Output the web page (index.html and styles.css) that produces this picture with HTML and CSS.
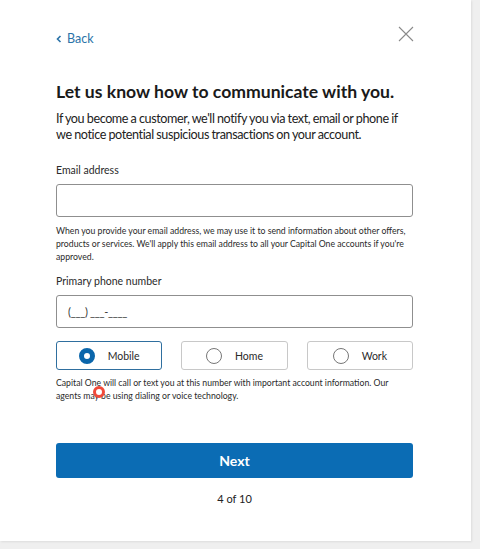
FILE: index.html
```html
<!DOCTYPE html>
<html lang="en">
<head>
<meta charset="utf-8">
<link rel="stylesheet" href="styles.css">
</head>
<body>
<div class="card">
  <div class="topbar">
    <a class="back" href="#"><svg width="6" height="8" viewBox="0 0 6 8"><path d="M4.5 1 L1.5 4 L4.5 7" fill="none" stroke="#2b73a8" stroke-width="1.6"/></svg><span>Back</span></a>
    <svg class="close" width="16" height="16" viewBox="0 0 16 16"><path d="M1 1 L15 15 M15 1 L1 15" stroke="#8a8a8a" stroke-width="1.1"/></svg>
  </div>
  <h1 class="title">Let us know how to communicate with you.</h1>
  <p class="intro">If you become a customer, we'll notify you via text, email or phone if we notice potential suspicious transactions on your account.</p>

  <label class="label">Email address</label>
  <div class="input"></div>
  <p class="help">When you provide your email address, we may use it to send information about other offers, products or services. We'll apply this email address to all your Capital One accounts if you're approved.</p>

  <label class="label label-phone">Primary phone number</label>
  <div class="input"><span class="placeholder">(___) ___-____</span></div>

  <div class="options">
    <div class="option selected"><span class="radio on"></span><span>Mobile</span></div>
    <div class="option"><span class="radio"></span><span>Home</span></div>
    <div class="option"><span class="radio"></span><span>Work</span></div>
  </div>
  <p class="help help-phone">Capital One will call or text you at this number with important account information. Our agents may be using dialing or voice technology.</p>

  <button class="next">Next</button>
  <p class="step">4 of 10</p>
  <span class="cursor"></span>
</div>
</body>
</html>
```
FILE: styles.css
```css
html, body {
  margin: 0;
  padding: 0;
}
body {
  background: #efefef;
  width: 480px;
  height: 549px;
  overflow: hidden;
  font-family: Lato, "Open Sans", sans-serif;
  color: #1f1f1f;
}
.card {
  position: relative;
  box-sizing: border-box;
  width: 471px;
  height: 541px;
  background: #fff;
  box-shadow: 1px 1px 2px rgba(0,0,0,0.08);
  padding: 0 58px 0 56px;
  display: flex;
  flex-direction: column;
}
.topbar {
  display: flex;
  justify-content: space-between;
  align-items: flex-start;
  height: 60px;
}
.back {
  margin-top: 31px;
  display: flex;
  align-items: center;
  gap: 5px;
  color: #2b73a8;
  text-decoration: none;
  font-size: 12.5px;
}
.close {
  margin-top: 26px;
  margin-right: -1px;
}
.title {
  margin: 21px 0 0;
  font-size: 17.6px;
  font-weight: 700;
  line-height: 22px;
  color: #1a1a1a;
}
.intro {
  margin: 8px 0 0;
  font-size: 12.6px;
  letter-spacing: -0.4px;
  word-spacing: -0.3px;
  line-height: 16px;
  color: #222;
}
.label {
  display: block;
  margin-top: 20px;
  font-size: 10.5px;
  line-height: 14px;
  color: #2a2a2a;
}
.label-phone {
  margin-top: 11px;
}
.input {
  margin-top: 7px;
  height: 33px;
  box-sizing: border-box;
  border: 1px solid #8f8f8f;
  border-radius: 3px;
  display: flex;
  align-items: center;
  padding-left: 11px;
}
.placeholder {
  font-size: 11px;
  letter-spacing: -0.3px;
  color: #333;
}
.help {
  margin: 7px 0 0;
  font-size: 8.7px;
  line-height: 13px;
  color: #2a2a2a;
}
.help-phone {
  margin-top: 6px;
}
.options {
  margin-top: 13px;
  display: grid;
  grid-template-columns: repeat(3, 1fr);
  column-gap: 19px;
}
.option {
  height: 29px;
  box-sizing: border-box;
  border: 1px solid #c8c8c8;
  border-radius: 3px;
  display: flex;
  align-items: center;
  justify-content: center;
  gap: 13px;
  font-size: 10.5px;
  color: #2a2a2a;
}
.option.selected {
  border-color: #2f6f9f;
}
.radio {
  width: 16px;
  height: 16px;
  box-sizing: border-box;
  border: 1px solid #777;
  border-radius: 50%;
}
.radio.on {
  border: 5px solid #0b66ab;
  background: #fff;
}
.next {
  margin-top: 41px;
  height: 35px;
  border: none;
  border-radius: 3px;
  background: #0b6cb4;
  color: #fff;
  font-family: inherit;
  font-size: 14px;
  font-weight: 700;
}
.step {
  margin: 14px 0 0;
  text-align: center;
  font-size: 11px;
  color: #222;
}
.cursor {
  position: absolute;
  left: 93px;
  top: 386px;
  width: 6px;
  height: 6px;
  border: 3px solid #f04a3a;
  border-radius: 50%;
  background: #fff;
}
```
